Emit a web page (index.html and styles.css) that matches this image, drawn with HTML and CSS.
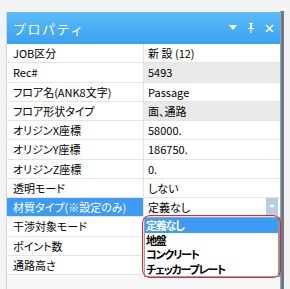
FILE: index.html
```html
<!DOCTYPE html>
<html lang="ja">
<head>
  <meta charset="UTF-8">
  <title>プロパティ</title>
  <link rel="stylesheet" href="styles.css">
</head>
<body>
  <div class="frame">
    <div class="panel">
      <div class="title">
        <span class="title-text">プロパティ</span>
        <span class="title-icons">
          <svg width="8" height="6" viewBox="0 0 8 6"><path d="M0 0h8L4 5z" fill="#fff"/></svg>
          <svg width="8" height="10" viewBox="0 0 8 10"><path d="M2 0h4v1H5v4h2v1H4.5v4h-1V6H1V5h2V1H2z M4 1h1v4H4z" fill="#fff"/></svg>
          <svg width="9" height="9" viewBox="0 0 9 9"><path d="M1 1l7 7M8 1L1 8" stroke="#fff" stroke-width="1.6"/></svg>
        </span>
      </div>

      <div class="grid">
        <div class="key">JOB区分</div><div class="val">新 設 (12)</div>
        <div class="key">Rec#</div><div class="val ro">5493</div>
        <div class="key">フロア名(ANK8文字)</div><div class="val">Passage</div>
        <div class="key">フロア形状タイプ</div><div class="val ro">面、通路</div>
        <div class="key">オリジンX座標</div><div class="val">58000.</div>
        <div class="key">オリジンY座標</div><div class="val">186750.</div>
        <div class="key">オリジンZ座標</div><div class="val">0.</div>
        <div class="key">透明モード</div><div class="val">しない</div>
        <div class="key active">材質タイプ(※設定のみ)</div>
        <div class="val combo">
          <span class="combo-text">定義なし</span>
          <span class="combo-btn"><svg width="6" height="4" viewBox="0 0 6 4"><path d="M0 0h6L3 3z" fill="#fff"/></svg></span>
          <ul class="list">
            <li class="sel">定義なし</li>
            <li>地盤</li>
            <li>コンクリート</li>
            <li>チェッカープレート</li>
          </ul>
          <div class="mark"></div>
        </div>
        <div class="key">干渉対象モード</div><div class="val"></div>
        <div class="key">ポイント数</div><div class="val"></div>
        <div class="key">通路高さ</div><div class="val"></div>
      </div>
    </div>
    <div class="edge"></div>
  </div>
</body>
</html>
```

FILE: styles.css
```css
body { margin: 0; width: 290px; height: 289px; overflow: hidden; background: #f3f3f3; font-family: "Noto Sans CJK JP", "DejaVu Sans", sans-serif; font-size: 11px; color: #000; }
.frame { display: flex; height: 289px; padding-top: 11px; padding-left: 6px; box-sizing: border-box; }
.panel { width: 274px; border-left: 1px solid #d4d4d4; border-top: 1px solid #fff; background: #f7f7f7; box-sizing: border-box; }
.edge { width: 3px; background: #687a8c; border-left: 1px solid #9aa8b6; }

.title { height: 32px; display: flex; align-items: center; justify-content: space-between; padding: 0 6px 0 6px; background: linear-gradient(#5cbcf7, #3aa2f0); color: #fff; }
.title-text { font-size: 13px; letter-spacing: 1.5px; }
.title-icons { display: flex; align-items: center; gap: 10px; }

.grid { display: grid; grid-template-columns: 137px 1fr; grid-auto-rows: 19.25px; }
.key, .val { border-bottom: 1px solid #e4e4e4; background: #fff; padding-left: 6px; line-height: 18px; white-space: nowrap; font-feature-settings: "palt"; }
.key { border-right: 1px solid #e4e4e4; }
.val { padding-left: 4px; }
.ro { background: #e9e9e9; }
.active { background: #3d9bf5; color: #fff; }

.combo { position: relative; display: flex; padding-right: 2px; }
.combo-text { flex: 1; }
.combo-btn { width: 12px; background: #b8cce4; display: flex; align-items: center; justify-content: center; }

.list { position: absolute; left: 0; top: 19px; width: 133px; margin: 0; padding: 0; list-style: none; background: #fff; border: 1px solid #9aa3ad; border-right: 3px solid #8a949e; z-index: 2; font-size: 11px; font-weight: bold; letter-spacing: -1.2px; }
.list li { height: 14.5px; line-height: 14.5px; padding-left: 1px; overflow: hidden; }
.list .sel { background: #3d9bf5; color: #fff; }
.mark { position: absolute; left: -2px; top: 17px; width: 139px; height: 63px; border: 1px solid #e02828; border-radius: 8px; box-sizing: border-box; z-index: 3; }
```
